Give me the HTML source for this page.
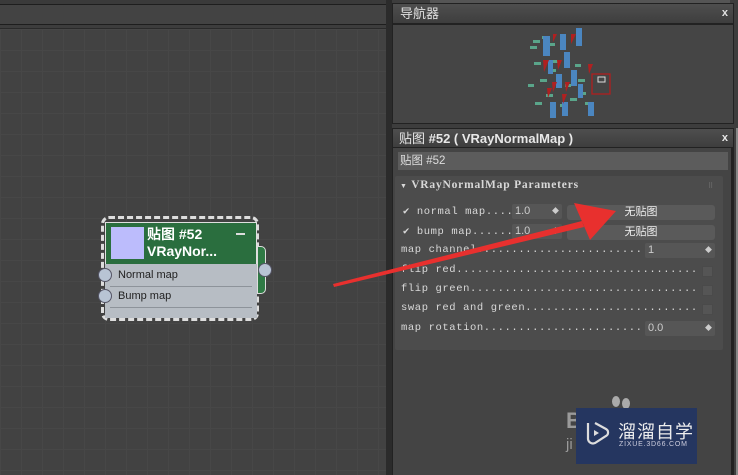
<!DOCTYPE html>
<html><head><meta charset="utf-8"><style>
*{margin:0;padding:0;box-sizing:border-box}
body{width:738px;height:475px;overflow:hidden;background:#3d3d3d;position:relative;font-family:"Liberation Sans","Noto Sans CJK SC",sans-serif}
.a{position:absolute}
.mono{font-family:"Liberation Mono","Noto Sans CJK SC",monospace;font-size:10.5px;color:#d8d8d8;letter-spacing:0.6px;white-space:nowrap;overflow:hidden}
.grid{background-color:#424242;background-image:linear-gradient(90deg,#474747 1px,transparent 1px),linear-gradient(#474747 1px,transparent 1px);background-size:21px 21px}
.spin{background:#565656;border-radius:2px;color:#ccc;font-size:11px;padding-left:3px;line-height:15px}
.btn{background:#5a5a5a;border-radius:3px;color:#eee;font-size:11px;text-align:center;line-height:15px}
.cb{width:11px;height:11px;background:#555;border:1px solid #4a4a4a}
</style></head><body>
<div class="a" style="left:0;top:0;width:388px;height:4px;background:#3a3a3a"></div>
<div class="a" style="left:0;top:4px;width:387px;height:21px;background:#434343;border:1px solid #1e1e1e;border-left:none"></div>
<div class="a grid" style="left:0;top:28px;width:386px;height:447px;border-top:1px solid #2a2a2a"></div>
<div class="a" style="left:386px;top:0;width:6px;height:475px;background:#2b2b2b"></div>
<div class="a" style="left:430px;top:0;width:300px;height:3px;background:#555"></div>
<!-- navigator -->
<div class="a" style="left:392px;top:3px;width:342px;height:21px;background:linear-gradient(#4e4e4e,#3e3e3e);border:1px solid #222;color:#e0e0e0;font-size:13px;line-height:19px;padding-left:7px">导航器<span style="position:absolute;right:5px;font-size:11px;font-weight:bold">x</span></div>
<div class="a" style="left:392px;top:24px;width:342px;height:100px;background:#454545;border:1px solid #222"></div>
<svg class="a" style="left:520px;top:24px" width="100" height="100">
<g fill="#5aa58a"><rect x="13" y="16" width="7" height="3"/><rect x="10" y="22" width="7" height="3"/><rect x="22" y="12" width="6" height="3"/><rect x="28" y="19" width="7" height="3"/><rect x="33" y="36" width="7" height="3"/><rect x="14" y="38" width="7" height="3"/><rect x="55" y="40" width="6" height="3"/><rect x="58" y="55" width="7" height="3"/><rect x="20" y="55" width="7" height="3"/><rect x="26" y="70" width="7" height="3"/><rect x="50" y="74" width="7" height="3"/><rect x="15" y="78" width="7" height="3"/><rect x="40" y="80" width="6" height="3"/><rect x="65" y="78" width="6" height="3"/><rect x="45" y="60" width="6" height="3"/><rect x="60" y="68" width="6" height="3"/><rect x="8" y="60" width="6" height="3"/><rect x="30" y="45" width="6" height="3"/></g>
<g fill="#4b86c0"><rect x="23" y="12" width="7" height="20"/><rect x="40" y="10" width="6" height="16"/><rect x="56" y="4" width="6" height="18"/><rect x="44" y="28" width="6" height="16"/><rect x="36" y="50" width="6" height="14"/><rect x="51" y="46" width="6" height="16"/><rect x="30" y="78" width="6" height="16"/><rect x="42" y="78" width="6" height="14"/><rect x="68" y="78" width="6" height="14"/><rect x="58" y="60" width="5" height="14"/><rect x="28" y="36" width="5" height="14"/></g>
<g fill="#b02020"><path d="M33 10l4 0-4 8z"/><path d="M51 10l5 0-5 10z"/><path d="M23 36l6 0-5 12z"/><path d="M37 36l5 0-4 10z"/><path d="M68 40l5 0-4 10z"/><path d="M32 58l5 0-4 10z"/><path d="M45 58l5 0-4 10z"/><path d="M27 64l5 0-4 10z"/><path d="M42 70l5 0-4 10z"/></g>
<rect x="72" y="50" width="18" height="20" fill="none" stroke="#b02020" stroke-width="1.3"/>
<rect x="78" y="53" width="7" height="5" fill="none" stroke="#ddd" stroke-width="1"/>
</svg>
<!-- param panel -->
<div class="a" style="left:392px;top:128px;width:342px;height:20px;background:linear-gradient(#4e4e4e,#3e3e3e);border:1px solid #222;color:#e8e8e8;font-size:13px;line-height:19px;padding-left:6px;font-weight:bold"><span style="font-weight:normal">贴图</span> #52 ( VRayNormalMap )<span style="position:absolute;right:5px;font-size:11px">x</span></div>
<div class="a" style="left:392px;top:148px;width:342px;height:327px;background:#444;border-left:1px solid #222;border-right:3px solid #222"></div>
<div class="a" style="left:736px;top:128px;width:2px;height:347px;background:#888"></div>
<div class="a" style="left:398px;top:152px;width:330px;height:18px;background:#5c5c5c;color:#ddd;font-size:11.5px;line-height:18px;padding-left:2px">贴图 #52</div>
<div class="a" style="left:395px;top:176px;width:328px;height:174px;background:#4c4c4c;border-radius:2px"></div>
<div class="a mono" style="left:400px;top:179px;font-weight:bold;font-family:'Liberation Serif',serif;font-size:11.5px;letter-spacing:0.8px"><span style="font-size:7px">▼</span> VRayNormalMap Parameters</div>
<div class="a" style="left:708px;top:182px;color:#777;font-size:7px">⠿</div>
<div class="a mono" style="left:403px;top:205px;width:108px">✔ normal map.........</div>
<div class="a spin" style="left:512px;top:204px;width:50px">1.0<span style="float:right;font-size:7px;padding-right:3px">◆</span></div>
<div class="a btn" style="left:567px;top:205px;width:148px">无贴图</div>
<div class="a mono" style="left:403px;top:225px;width:108px">✔ bump map...........</div>
<div class="a spin" style="left:512px;top:224px;width:50px">1.0<span style="float:right;font-size:7px;padding-right:3px">◆</span></div>
<div class="a btn" style="left:567px;top:225px;width:148px">无贴图</div>
<div class="a mono" style="left:401px;top:244px;width:240px">map channel...............................................</div>
<div class="a spin" style="left:645px;top:243px;width:70px">1<span style="float:right;font-size:7px;padding-right:3px">◆</span></div>
<div class="a mono" style="left:401px;top:264px;width:298px">flip red.......................................................</div>
<div class="a cb" style="left:702px;top:266px"></div>
<div class="a mono" style="left:401px;top:283px;width:298px">flip green.....................................................</div>
<div class="a cb" style="left:702px;top:285px"></div>
<div class="a mono" style="left:401px;top:302px;width:298px">swap red and green.............................................</div>
<div class="a cb" style="left:702px;top:304px"></div>
<div class="a mono" style="left:401px;top:322px;width:240px">map rotation..............................................</div>
<div class="a spin" style="left:645px;top:321px;width:70px">0.0<span style="float:right;font-size:7px;padding-right:3px">◆</span></div>
<!-- watermark -->
<div class="a" style="left:566px;top:408px;color:#9a9a9a;font-size:22px;font-weight:bold">B</div>
<div class="a" style="left:566px;top:436px;color:#9a9a9a;font-size:15px">ji</div>
<div class="a" style="left:612px;top:396px;width:8px;height:11px;border-radius:50%;background:#aaa"></div>
<div class="a" style="left:622px;top:398px;width:8px;height:11px;border-radius:50%;background:#aaa"></div>
<div class="a" style="left:576px;top:408px;width:121px;height:56px;background:#253660"></div>
<svg class="a" style="left:582px;top:418px" width="30" height="30"><path d="M6 5v16a5 5 0 0 0 7 4l11-7a4 4 0 0 0 0-7L13 5" fill="none" stroke="#ddd" stroke-width="2.2"/><path d="M12 12l5 3-5 3z" fill="#ddd"/></svg>
<div class="a" style="left:618px;top:418px;color:#eee;font-size:18px;letter-spacing:1px;font-family:'Noto Sans CJK SC',sans-serif">溜溜自学</div>
<div class="a" style="left:619px;top:441px;color:#ccd;font-size:7px;letter-spacing:0.8px">ZIXUE.3D66.COM</div>
<!-- node -->
<div class="a" style="left:101px;top:216px;width:158px;height:105px;border:3px dashed #ddd;border-radius:8px"></div>
<div class="a" style="left:257px;top:246px;width:9px;height:48px;background:#2f7a45;border:1px solid #ddd;border-radius:0 5px 5px 0"></div>
<div class="a" style="left:105px;top:222px;width:152px;height:43px;background:#2a6e3e;border:1px solid #e0e0e0;border-bottom:none"></div>
<div class="a" style="left:111px;top:227px;width:33px;height:32px;background:#bcbcfc"></div>
<div class="a" style="left:147px;top:226px;color:#fff;font-size:14px;font-weight:bold;line-height:17px">贴图 #52<br>VRayNor...</div>
<div class="a" style="left:236px;top:233px;width:9px;height:2px;background:#ddd"></div>
<div class="a" style="left:105px;top:264px;width:152px;height:54px;background:#b7bdc4"></div>
<div class="a" style="left:110px;top:286px;width:142px;height:1px;background:#8d939a"></div>
<div class="a" style="left:110px;top:307px;width:142px;height:1px;background:#8d939a"></div>
<div class="a" style="left:118px;top:269px;font-size:11px;color:#222">Normal map</div>
<div class="a" style="left:118px;top:290px;font-size:11px;color:#222">Bump map</div>
<div class="a" style="left:98px;top:268px;width:14px;height:14px;border-radius:50%;background:#b8c4d4;border:1px solid #556"></div>
<div class="a" style="left:98px;top:289px;width:14px;height:14px;border-radius:50%;background:#b8c4d4;border:1px solid #556"></div>
<div class="a" style="left:258px;top:263px;width:14px;height:14px;border-radius:50%;background:#b8c4d4;border:1px solid #556"></div>
<!-- arrow -->
<svg class="a" style="left:0;top:0" width="738" height="475"><path d="M333 284L582 221L584 227L334 287Z" fill="#e8302e"/><path d="M616 211L574 203L590 240Z" fill="#e8302e"/></svg>
</body></html>
